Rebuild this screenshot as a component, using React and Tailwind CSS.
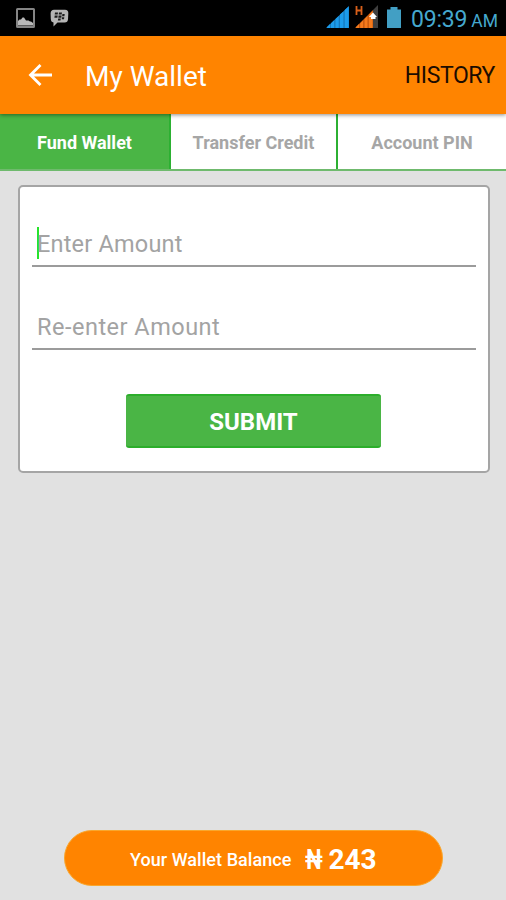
const tabs = [
  { label: 'Fund Wallet', active: true },
  { label: 'Transfer Credit', active: false },
  { label: 'Account PIN', active: false },
];

function PictureIcon() {
  return (
    <svg width="19" height="20" viewBox="0 0 19 20">
      <rect x="1" y="1" width="17" height="18" rx="0.5" fill="none" stroke="#858585" strokeWidth="2" />
      <path d="M2 17.500v-4.500l1.500-1.500h1.500l1.500-2h1.500l2 3h2.500l1.500 1h1l2 1.500v2.500z" fill="#b9b9b9" />
    </svg>
  );
}

function MessengerIcon() {
  return (
    <svg width="19" height="18" viewBox="0 0 19 18">
      <path d="M4 .8h11Q18.500.8 18.300 4.300l-.3 6q-.3 3.200-3.300 3.200H7.500l-4 4v-4Q.9 13 .8 10L.6 4.300Q.8.800 4 .8z" fill="#b5b5b5" />
      <g fill="#1c1c1c">
        <path d="M5 3.400h3l-.3 2.200H4.700zM9 3.400h3l-.3 2.200H8.700zM4.700 6.600h3l-.3 2.200H4.400zM8.600 6.600h3l-.3 2.200H8.300zM12.400 5h2.300l-.3 2.200h-2.300zM12 8.200h2.300l-.3 2.100h-2.300zM8.200 9.600h2.600l-.3 2H7.900z" />
      </g>
    </svg>
  );
}

function SignalIcon() {
  return (
    <svg width="23" height="22" viewBox="0 0 23 22">
      <path d="M0 22L23 0v22z" fill="#1478bd" />
      <path d="M1 22v-1l3-2.900V22zM5 22v-4.800l3.200-3V22zM9.500 22v-9.100l3.200-3V22zM14 22V8.600l3.400-3.200V22zM18.700 22V4.100L22.600.4V22z" fill="#1c9bea" />
    </svg>
  );
}

function DataSignalIcon() {
  return (
    <svg width="24" height="23" viewBox="0 0 24 23">
      <path d="M1.500 1v9M6.500 1v9M1.500 5.500h5" stroke="#d9601a" strokeWidth="1.800" fill="none" />
      <path d="M18 5L23 0v23h-5z" fill="#3f3f3f" />
      <path d="M0 23L18 5V23z" fill="#c2560f" />
      <path d="M1 23v-1l3-2.900V23zM5.200 23v-4.800l3-3V23zM9.500 23v-9.100l3-3V23zM13.800 23V9.800L17.500 6V23z" fill="#f47a1c" />
      <path d="M18 7.500l4 4.500h-1.500v2h-4.500v-2h-2z" fill="#fff" />
    </svg>
  );
}

function StatusBar() {
  return (
    <div className="flex h-9 items-start bg-black text-[#45a9cf]">
      <div className="ml-4 mt-2"><PictureIcon /></div>
      <div className="ml-[15px] mt-[9px]"><MessengerIcon /></div>
      <div className="ml-auto mt-1.5"><SignalIcon /></div>
      <div className="ml-[6px] mt-[5px]"><DataSignalIcon /></div>
      <svg className="ml-[8px] mt-[7px]" width="14" height="21" viewBox="0 0 14 21">
        <path d="M3.500 0h7v2.500H14V21H0V2.500h3.500z" fill="#429fc4" />
      </svg>
      <div className="ml-[10px] mr-2 mt-1 flex w-[87px] items-baseline justify-between whitespace-nowrap leading-8">
        <span className="text-[23px] tracking-[-0.200px]">09:39</span>
        <span className="text-[17.500px]">AM</span>
      </div>
    </div>
  );
}

function AmountField({ label, focused, className }) {
  return (
    <div className="flex h-10 items-start border-b-2 border-[#9b9b9b] pl-[5px]">
      <div className={`flex h-8 items-center border-l-2 text-[23.500px] text-[#a3a3a3] ${focused ? 'border-[#27e32b]' : 'border-transparent'} ${className}`}>
        <span className="-ml-0.5 mt-[3px] whitespace-nowrap">{label}</span>
      </div>
    </div>
  );
}

export default function App() {
  return (
    <div className="flex h-[900px] w-[506px] flex-col overflow-hidden bg-[#e1e1e1] font-[Roboto,sans-serif]">
      <StatusBar />

      <header className="relative z-10 flex h-[78px] items-center bg-[#ff8400] shadow-[0_1px_4px_rgba(0,0,0,0.45)]">
        <svg className="ml-7" width="25" height="24" viewBox="0 0 25 24" fill="none" stroke="#fff" strokeWidth="2.800">
          <path d="M12.500 2l-10 10 10 10M2.500 12H24" />
        </svg>
        <h1 className="ml-8 mt-1 text-[28px] leading-9 text-white">My Wallet</h1>
        <span className="ml-auto mr-[11px] mt-[3px] text-[23px] tracking-[-0.400px] text-[#1c0c00]">HISTORY</span>
      </header>

      <nav className="grid h-[57px] grid-cols-[171px_167px_168px] border-b-2 border-[#6fba6d] bg-white text-[18px] font-bold">
        {tabs.map((tab, i) => (
          <div
            key={tab.label}
            className={`flex items-center justify-center pt-0.5 ${tab.active ? 'bg-[#4ab545] text-white' : 'text-[#a6a6a6]'} ${i < 2 ? 'border-r-2 border-[#2cb032]' : ''}`}
          >
            {tab.label}
          </div>
        ))}
      </nav>

      <section className="ml-[18px] mt-[14px] flex h-[288px] w-[472px] flex-col rounded-[5px] border-2 border-[#a5a5a5] bg-white px-3 pt-10">
        <AmountField label="Enter Amount" focused className="tracking-[0.200px]" />
        <div className="h-[43px]" />
        <AmountField label="Re-enter Amount" className="tracking-[0.500px]" />
        <button className="ml-[94px] mt-[44px] h-[54px] w-[255px] rounded-[3px] border-y-2 border-[#2cae2b] bg-[#4ab545] pt-0.5 text-2xl font-bold text-white">
          SUBMIT
        </button>
      </section>

      <footer className="mb-3.5 ml-[64px] mt-auto flex h-[56px] w-[379px] items-center rounded-full border border-[#f9a72d] bg-[#ff8400] pl-[65px] text-white">
        <span className="mt-0.5 text-[18px] font-medium tracking-[0.050px]">Your Wallet Balance</span>
        <span className="ml-[14px] mt-1 flex text-[28px] font-bold">
          <span className="w-[23px] origin-left scale-x-[0.780]">₦</span>
          <span>243</span>
        </span>
      </footer>
    </div>
  );
}
